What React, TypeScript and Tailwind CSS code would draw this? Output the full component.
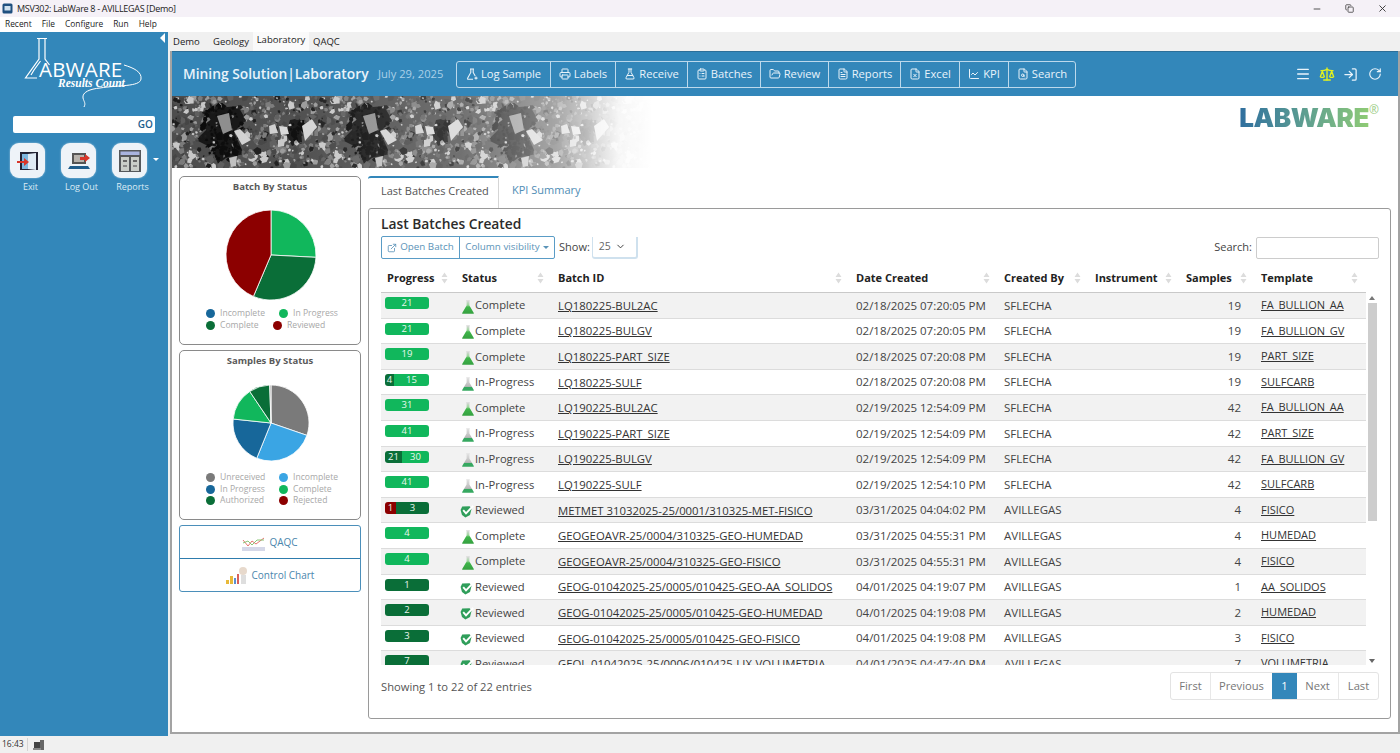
import React from "react";
import {
  FlaskConical,
  Printer,
  ClipboardList,
  FolderOpen,
  FileText,
  FileX,
  LineChart,
  FileSearch,
  Menu,
  Scale,
  LogIn,
  RotateCw,
  Minus,
  X,
  Copy,
  ExternalLink,
  ChevronDown,
} from "lucide-react";

type Seg = { v: number; w?: number; c: string };
type Row = {
  bar: Seg[];
  status: "Complete" | "In-Progress" | "Reviewed";
  id: string;
  date: string;
  by: string;
  samples: number;
  tpl: string;
};

const G = "bg-[#11b75c]";
const D = "bg-[#0a6e38]";
const R = "bg-[#8c0000]";

const rows: Row[] = [
  { bar: [{ v: 21, c: G }], status: "Complete", id: "LQ180225-BUL2AC", date: "02/18/2025 07:20:05 PM", by: "SFLECHA", samples: 19, tpl: "FA_BULLION_AA" },
  { bar: [{ v: 21, c: G }], status: "Complete", id: "LQ180225-BULGV", date: "02/18/2025 07:20:05 PM", by: "SFLECHA", samples: 19, tpl: "FA_BULLION_GV" },
  { bar: [{ v: 19, c: G }], status: "Complete", id: "LQ180225-PART_SIZE", date: "02/18/2025 07:20:08 PM", by: "SFLECHA", samples: 19, tpl: "PART_SIZE" },
  { bar: [{ v: 4, w: 9, c: D }, { v: 15, c: G }], status: "In-Progress", id: "LQ180225-SULF", date: "02/18/2025 07:20:08 PM", by: "SFLECHA", samples: 19, tpl: "SULFCARB" },
  { bar: [{ v: 31, c: G }], status: "Complete", id: "LQ190225-BUL2AC", date: "02/19/2025 12:54:09 PM", by: "SFLECHA", samples: 42, tpl: "FA_BULLION_AA" },
  { bar: [{ v: 41, c: G }], status: "In-Progress", id: "LQ190225-PART_SIZE", date: "02/19/2025 12:54:09 PM", by: "SFLECHA", samples: 42, tpl: "PART_SIZE" },
  { bar: [{ v: 21, w: 17, c: D }, { v: 30, c: G }], status: "In-Progress", id: "LQ190225-BULGV", date: "02/19/2025 12:54:09 PM", by: "SFLECHA", samples: 42, tpl: "FA_BULLION_GV" },
  { bar: [{ v: 41, c: G }], status: "In-Progress", id: "LQ190225-SULF", date: "02/19/2025 12:54:10 PM", by: "SFLECHA", samples: 42, tpl: "SULFCARB" },
  { bar: [{ v: 1, w: 11, c: R }, { v: 3, c: D }], status: "Reviewed", id: "METMET 31032025-25/0001/310325-MET-FISICO", date: "03/31/2025 04:04:02 PM", by: "AVILLEGAS", samples: 4, tpl: "FISICO" },
  { bar: [{ v: 4, c: G }], status: "Complete", id: "GEOGEOAVR-25/0004/310325-GEO-HUMEDAD", date: "03/31/2025 04:55:31 PM", by: "AVILLEGAS", samples: 4, tpl: "HUMEDAD" },
  { bar: [{ v: 4, c: G }], status: "Complete", id: "GEOGEOAVR-25/0004/310325-GEO-FISICO", date: "03/31/2025 04:55:31 PM", by: "AVILLEGAS", samples: 4, tpl: "FISICO" },
  { bar: [{ v: 1, c: D }], status: "Reviewed", id: "GEOG-01042025-25/0005/010425-GEO-AA_SOLIDOS", date: "04/01/2025 04:19:07 PM", by: "AVILLEGAS", samples: 1, tpl: "AA_SOLIDOS" },
  { bar: [{ v: 2, c: D }], status: "Reviewed", id: "GEOG-01042025-25/0005/010425-GEO-HUMEDAD", date: "04/01/2025 04:19:08 PM", by: "AVILLEGAS", samples: 2, tpl: "HUMEDAD" },
  { bar: [{ v: 3, c: D }], status: "Reviewed", id: "GEOG-01042025-25/0005/010425-GEO-FISICO", date: "04/01/2025 04:19:08 PM", by: "AVILLEGAS", samples: 3, tpl: "FISICO" },
  { bar: [{ v: 7, c: D }], status: "Reviewed", id: "GEOL-01042025-25/0006/010425-LIX-VOLUMETRIA", date: "04/01/2025 04:47:40 PM", by: "AVILLEGAS", samples: 7, tpl: "VOLUMETRIA" },
];

function FlaskPlus({ size }: { size: number }) {
  return (
    <svg width={size} height={size} viewBox="0 0 12 12" fill="none" stroke="currentColor" strokeWidth="1.1">
      <path d="M4 1h4M4.8 1v3.4L1.6 10.2c-.3.5 0 1 .6 1H7M7.2 1v3.4l2 3.6" />
      <path d="M10 8.6v3M8.5 10.1h3" />
    </svg>
  );
}

const navItems = [
  { label: "Log Sample", Icon: FlaskPlus, w: "w-[93px]" },
  { label: "Labels", Icon: Printer, w: "w-[65px]" },
  { label: "Receive", Icon: FlaskConical, w: "w-[72px]" },
  { label: "Batches", Icon: ClipboardList, w: "w-[73px]" },
  { label: "Review", Icon: FolderOpen, w: "w-[68px]" },
  { label: "Reports", Icon: FileText, w: "w-[72px]" },
  { label: "Excel", Icon: FileX, w: "w-[59px]" },
  { label: "KPI", Icon: LineChart, w: "w-[49px]" },
  { label: "Search", Icon: FileSearch, w: "w-[67px]" },
];

const columns = [
  { label: "Progress", w: "w-[75px]" },
  { label: "Status", w: "w-[96px]" },
  { label: "Batch ID", w: "w-[298px]" },
  { label: "Date Created", w: "w-[148px]" },
  { label: "Created By", w: "w-[91px]" },
  { label: "Instrument", w: "w-[91px]" },
  { label: "Samples", w: "w-[75px]" },
  { label: "Template", w: "w-[111px]" },
];

function arc(cx: number, cy: number, r: number, a: number, b: number) {
  const p = (d: number) => {
    const t = ((d - 90) * Math.PI) / 180;
    return `${cx + r * Math.cos(t)} ${cy + r * Math.sin(t)}`;
  };
  return `M${cx} ${cy}L${p(a)}A${r} ${r} 0 ${b - a > 180 ? 1 : 0} 1 ${p(b)}Z`;
}

function Pie({ r, slices }: { r: number; slices: [number, number, string][] }) {
  const s = r * 2 + 2;
  return (
    <svg width={s} height={s} className="block">
      {slices.map(([a, b, c]) => (
        <path key={a} d={arc(r + 1, r + 1, r, a, b)} fill={c} stroke="#fff" strokeWidth="0.8" />
      ))}
    </svg>
  );
}

function Legend({ label, color, w }: { label: string; color: string; w: string }) {
  return (
    <div className={`flex items-center ${w}`}>
      <span className={`w-[9px] h-[9px] rounded-full mr-[5px] shrink-0 ${color}`} />
      <span className="text-[8.6px] leading-[11.5px] text-[#a8a8a8] whitespace-nowrap">{label}</span>
    </div>
  );
}

// one tile of the rock picture, it repeats every 146px across the banner
function RockTexture() {
  let seed = 4321;
  const rnd = () => {
    seed = (seed * 16807) % 2147483647;
    return seed / 2147483647;
  };
  const shards: React.ReactElement[] = [];
  for (let i = 0; i < 640; i++) {
    const x = rnd() * 146;
    const y = rnd() * 72;
    const inDark = Math.hypot(x - 50, (y - 36) * 0.7) < 21 || Math.hypot(x - 124, y - 36) < 10;
    const dark = inDark && rnd() < 0.8;
    const s = 1 + rnd() * rnd() * 4.5;
    const start = rnd() * 6;
    const pts = Array.from({ length: 5 }, (_, k) => {
      const t = start + (k / 5) * Math.PI * 2;
      const rr = s * (0.6 + rnd() * 0.6);
      return `${(x + rr * Math.cos(t)).toFixed(1)},${(y + rr * Math.sin(t)).toFixed(1)}`;
    }).join(" ");
    const pick = ["#1c1c1c", "#444", "#5e5e5e", "#7a7a7a", "#9a9a9a", "#c8c8c8"][Math.floor(rnd() * 6)];
    shards.push(<polygon key={i} points={pts} fill={dark ? "#0a0a0a" : pick} />);
  }
  return (
    <svg width="480" height="72" className="block shrink-0">
      <defs>
        <pattern id="rockTile" width="146" height="72" patternUnits="userSpaceOnUse">
          <rect width="146" height="72" fill="#4d4d4d" />
          <polygon points="30,16 44,12 66,10 74,24 62,36 72,58 54,62 46,68 40,52 24,44 36,32" fill="#161616" />
          <polygon points="118,24 128,22 130,46 120,50 114,38" fill="#181818" />
          {shards}
          <polygon points="45,20 57,17 60,34 51,38" fill="#8d8d8d" />
          <polygon points="62,35 68,33 79,44 70,49" fill="#d2d2d2" />
          <polygon points="97,30 103,28 106,37 98,38" fill="#cfcfcf" />
          <polygon points="107,30 115,31 117,38 109,39" fill="#d8d8d8" />
          <polygon points="106,44 113,43 112,50 106,51" fill="#c8c8c8" />
          <polygon points="130,30 140,23 145,31 133,45" fill="#d5d5d5" />
          <polygon points="57,62 65,60 64,70 59,71" fill="#c0c0c0" />
        </pattern>
        <linearGradient id="rockFade" x1="0" x2="1" y1="0" y2="0">
          <stop offset="0" stopColor="#fff" stopOpacity="0" />
          <stop offset="0.28" stopColor="#fff" stopOpacity="0.03" />
          <stop offset="0.6" stopColor="#fff" stopOpacity="0.2" />
          <stop offset="0.8" stopColor="#fff" stopOpacity="0.5" />
          <stop offset="0.93" stopColor="#fff" stopOpacity="0.95" />
          <stop offset="1" stopColor="#fff" stopOpacity="1" />
        </linearGradient>
      </defs>
      <rect width="480" height="72" fill="url(#rockTile)" />
      <rect width="480" height="72" fill="url(#rockFade)" />
    </svg>
  );
}

function LabFlask({ level }: { level: "full" | "low" }) {
  const id = level === "full" ? "flaskFull" : "flaskLow";
  return (
    <svg width="12" height="14" viewBox="0 0 12 14" className="shrink-0 translate-y-[1px]">
      <defs>
        <linearGradient id={id} x1="0" x2="0" y1="0" y2="1">
          {level === "full" ? (
            <>
              <stop offset="0.05" stopColor="#d8d8d8" />
              <stop offset="0.35" stopColor="#9fd69f" />
              <stop offset="0.5" stopColor="#3fb54a" />
              <stop offset="1" stopColor="#35a040" />
            </>
          ) : (
            <>
              <stop offset="0.05" stopColor="#e2e2e2" />
              <stop offset="0.68" stopColor="#b8b8b8" />
              <stop offset="0.7" stopColor="#36a860" />
              <stop offset="1" stopColor="#36a860" />
            </>
          )}
        </linearGradient>
      </defs>
      <path d="M4.2 0.3h3.6v0.9h-0.4v4.2L11.8 13c.2.4 0 .8-.5.8H.7c-.5 0-.7-.4-.5-.8L4.6 5.4V1.2h-.4z" fill={`url(#${id})`} />
    </svg>
  );
}

function StatusIcon({ status }: { status: Row["status"] }) {
  if (status === "Reviewed") {
    return (
      <svg width="14" height="13" viewBox="0 0 14 13" className="shrink-0 -ml-[2px] translate-y-[1px]">
        <path d="M0.6 5 2.2 1.6 9.6 1.2 11.6 3.6 10 10 5.4 12.6 2 10z" fill="#2f9e5a" />
        <path d="M3.2 5.2 6 8.4 13.2 0.8" fill="none" stroke="#fff" strokeWidth="1.9" />
      </svg>
    );
  }
  return <LabFlask level={status === "Complete" ? "full" : "low"} />;
}

function Arrows() {
  return (
    <svg width="7" height="12" viewBox="0 0 7 12" className="shrink-0">
      <path d="M3.5 0.5 6.5 5H0.5z M3.5 11.5 0.5 7H6.5z" fill="#dcdcdc" />
    </svg>
  );
}

function SideButton({ label, children }: { label: string; children: React.ReactNode }) {
  return (
    <div className="flex flex-col items-center w-[51px]">
      <div className="w-[35px] h-[35px] rounded-[9px] bg-[#eef3f8] flex items-center justify-center shadow-[0_0_2px_rgba(255,255,255,0.6)]">
        {children}
      </div>
      <span className="text-[9px] leading-[12px] mt-[3px] translate-x-[3px] text-[#dcebf5] whitespace-nowrap">{label}</span>
    </div>
  );
}

export default function App() {
  return (
    <div className="w-[1400px] h-[753px] overflow-hidden flex flex-col bg-white text-[#333] font-['Open_Sans',sans-serif]">
      {/* title bar */}
      <div className="h-[17px] shrink-0 bg-[#f5f1f7] flex items-center pl-[2px] text-[#222]">
        <svg width="11" height="11" viewBox="0 0 11 11" className="mr-[4px]">
          <rect x="0.5" y="0.5" width="10" height="10" rx="1.5" fill="#1f4f7f" />
          <rect x="2.5" y="3" width="6" height="4.5" fill="#cfe0ee" />
        </svg>
        <span className="text-[9px] tracking-[-0.3px]">MSV302: LabWare 8 - AVILLEGAS [Demo]</span>
        <div className="ml-auto flex items-center gap-[23px] pr-[12px] text-[#333]">
          <Minus size={10} />
          <Copy size={9} />
          <X size={11} />
        </div>
      </div>

      {/* menu */}
      <div className="h-[15px] shrink-0 bg-white flex items-center pl-[5px] gap-[10px] text-[8.4px] text-[#222]">
        <span>Recent</span>
        <span>File</span>
        <span>Configure</span>
        <span>Run</span>
        <span>Help</span>
      </div>

      <div className="flex-1 flex min-h-0">
        {/* sidebar */}
        <aside className="w-[168px] shrink-0 bg-[#3387ba] relative flex flex-col">
          <div className="absolute left-[160px] top-[1px] w-0 h-0 border-y-[5px] border-y-transparent border-r-[5px] border-r-white" />
          <div className="relative h-[84px] shrink-0">
            <svg width="168" height="84" className="absolute left-0 top-0">
              <path
                d="M37 6.5h10 M39 6.5V27L25.5 46H37 M45 6.5V27L49.5 33 M40.5 29 L34 38 L31 43"
                fill="none"
                stroke="#fff"
                strokeWidth="1.2"
              />
              <path
                d="M124 33C134 36 142 40 141 47C140 55 118 53 100 56C90 57 82 60 83 66C84 70 86 71 84 75"
                fill="none"
                stroke="#fff"
                strokeWidth="1"
              />
            </svg>
            <span className="absolute left-[39px] top-[30px] text-[20.5px] leading-[14px] font-medium text-white tracking-[0.2px]">
              ABWARE
            </span>
            <span className="absolute left-[58px] top-[46px] text-[11.5px] leading-[11px] italic font-semibold text-white font-['Liberation_Serif',serif]">
              Results Count
            </span>
          </div>
          <div className="mx-[13px] h-[17px] bg-white rounded-[2px] flex items-center justify-end pr-[2px] text-[10px] font-semibold text-[#1d5f8e]">
            GO
          </div>
          <div className="flex pl-[2px] mt-[10px] relative">
            <SideButton label="Exit">
              <svg width="24" height="24" viewBox="0 0 24 24">
                <rect x="4" y="3" width="18" height="18" fill="#223" />
                <rect x="6" y="5" width="14" height="15" fill="#7db6de" />
                <path d="M12 5l8 -1v17l-8-1z" fill="#dfeaf4" />
                <path d="M1 12h7V9l5 4-5 4v-3H1z" fill="#d8362a" />
              </svg>
            </SideButton>
            <SideButton label="Log Out">
              <svg width="24" height="24" viewBox="0 0 24 24">
                <rect x="5" y="4" width="14" height="11" fill="#555" />
                <rect x="7" y="6" width="10" height="7" fill="#b7b2ac" />
                <path d="M3 17h18l2 3H1z" fill="#1f5d8c" />
                <path d="M13 8h5V5l5 4-5 4v-2h-5z" fill="#d8362a" />
              </svg>
            </SideButton>
            <SideButton label="Reports">
              <svg width="24" height="24" viewBox="0 0 24 24">
                <rect x="1" y="1" width="22" height="22" fill="#55585c" />
                <rect x="2.5" y="2.5" width="19" height="3.5" fill="#a9b4e0" />
                <rect x="3" y="8" width="8" height="14" fill="#c9cdc9" />
                <rect x="13" y="8" width="8" height="14" fill="#c9cdc9" />
                <rect x="5" y="11" width="4" height="2" fill="#666" />
                <rect x="15" y="11" width="4" height="2" fill="#666" />
                <rect x="5" y="16" width="4" height="2" fill="#888" />
                <rect x="15" y="16" width="4" height="2" fill="#888" />
              </svg>
            </SideButton>
            <div className="w-0 h-0 mt-[15px] -ml-[2px] border-x-[3px] border-x-transparent border-t-[3px] border-t-white" />
          </div>
        </aside>

        <div className="flex-1 min-w-0 flex flex-col bg-[#f0f0f0]">
          {/* window tabs */}
          <div className="h-[19px] shrink-0 flex items-end pl-[2px] text-[9.5px] text-[#222]">
            <span className="w-[41px] h-[17px] pl-[3px] flex items-center">Demo</span>
            <span className="w-[42px] h-[17px] pl-[2px] flex items-center">Geology</span>
            <span className="w-[56px] h-[19px] bg-[#fafafa] flex items-center justify-center pb-[2px]">Laboratory</span>
            <span className="h-[17px] pl-[4px] flex items-center">QAQC</span>
          </div>

          {/* frame */}
          <div className="flex-1 min-h-0 ml-[2px] mb-[2px] border-l-2 border-r-2 border-b-2 border-[#a3a3a3] bg-white flex flex-col">
            <header className="h-[45px] shrink-0 bg-[#3387ba] border-t border-[#2c6f99] flex items-center pl-[11px] pr-[16px]">
              <h1 className="text-[13.8px] font-semibold text-[#e9f3fa] w-[195px] whitespace-nowrap">Mining Solution|Laboratory</h1>
              <span className="text-[11.2px] text-[#a9d0e8] w-[78px] whitespace-nowrap">July 29, 2025</span>
              <nav className="flex h-[27px] border border-[#bcd9ec] rounded-[3px]">
                {navItems.map(({ label, Icon, w }, i) => (
                  <div
                    key={label}
                    className={`${w} flex items-center justify-center gap-[3px] text-[11.2px] text-[#e9f3fa] whitespace-nowrap ${i ? "border-l border-[#bcd9ec]" : ""}`}
                  >
                    <Icon size={12} />
                    {label}
                  </div>
                ))}
              </nav>
              <div className="ml-auto flex items-center gap-[8px] text-[#eaf4fb]">
                <Menu size={16} />
                <Scale size={16} className="text-[#e3f21f]" />
                <LogIn size={15} />
                <RotateCw size={14} className="ml-[2px]" />
              </div>
            </header>

            {/* banner */}
            <div className="h-[72px] shrink-0 flex overflow-hidden">
              <RockTexture />
              <div className="ml-auto mr-[19px] mt-[9px] flex items-start">
                <span className="text-[26px] leading-[26px] font-black tracking-[-0.4px] text-transparent bg-clip-text bg-linear-to-r from-[#2f6e9e] to-[#8fcb74] font-['Inter',sans-serif]">
                  LABWARE
                </span>
                <span className="text-[12px] leading-[12px] text-[#9ccd85] -mt-[1px]">®</span>
              </div>
            </div>

            {/* body */}
            <div className="flex-1 min-h-0 flex pl-[7px] pr-[7px] pt-[8px]">
              <div className="w-[182px] shrink-0 flex flex-col gap-[5px]">
                <section className="h-[169px] border border-[#8a8a8a] rounded-[5px] flex flex-col items-center pt-[4px]">
                  <h3 className="text-[9.5px] leading-[12px] font-bold text-[#5a5a5a]">Batch By Status</h3>
                  <div className="mt-[16px] ml-[1px]">
                    <Pie r={45} slices={[[0, 93, "#11b75c"], [93, 203, "#0a6e38"], [203, 360, "#8c0000"]]} />
                  </div>
                  <div className="self-start ml-[26px] mt-[7px] flex flex-col">
                    <div className="flex">
                      <Legend label="Incomplete" color="bg-[#17679a]" w="w-[73px]" />
                      <Legend label="In Progress" color="bg-[#11b75c]" w="w-[73px]" />
                    </div>
                    <div className="flex">
                      <Legend label="Complete" color="bg-[#0a6e38]" w="w-[67px]" />
                      <Legend label="Reviewed" color="bg-[#8c0000]" w="w-[73px]" />
                    </div>
                  </div>
                </section>
                <section className="h-[170px] border border-[#8a8a8a] rounded-[5px] flex flex-col items-center pt-[4px]">
                  <h3 className="text-[9.5px] leading-[12px] font-bold text-[#5a5a5a]">Samples By Status</h3>
                  <div className="mt-[17px] ml-[1px]">
                    <Pie
                      r={38}
                      slices={[
                        [0, 109, "#7a7a7a"],
                        [109, 202, "#3aa5e4"],
                        [202, 276, "#17679a"],
                        [276, 326, "#11b75c"],
                        [326, 358, "#0a6e38"],
                        [358, 360, "#999"],
                      ]}
                    />
                  </div>
                  <div className="self-start ml-[26px] mt-[10px] grid grid-cols-[73px_73px]">
                    <Legend label="Unreceived" color="bg-[#7a7a7a]" w="" />
                    <Legend label="Incomplete" color="bg-[#3aa5e4]" w="" />
                    <Legend label="In Progress" color="bg-[#17679a]" w="" />
                    <Legend label="Complete" color="bg-[#11b75c]" w="" />
                    <Legend label="Authorized" color="bg-[#0a6e38]" w="" />
                    <Legend label="Rejected" color="bg-[#8c0000]" w="" />
                  </div>
                </section>
                <div className="h-[67px] border border-[#4b8fba] rounded-[3px] flex flex-col text-[10px] text-[#4a86ad]">
                  <div className="h-[33px] flex items-center justify-center gap-[4px] border-b border-[#2e7cad]">
                    <svg width="23" height="18" viewBox="0 0 23 18">
                      <rect y="14" width="23" height="4" fill="#d5d8e8" />
                      <path d="M1 7 6 13 10 8 14 11 22 5" fill="none" stroke="#e2675f" strokeWidth="0.9" />
                      <path d="M1 10 6 8 10 12 15 7 22 7" fill="none" stroke="#7fbf6a" strokeWidth="0.9" />
                    </svg>
                    QAQC
                  </div>
                  <div className="flex-1 flex items-center justify-center gap-[3px]">
                    <svg width="23" height="20" viewBox="0 0 23 20">
                      <rect x="0" y="15" width="3" height="4" fill="#e8b93a" />
                      <rect x="4" y="11" width="3" height="8" fill="#e8b93a" />
                      <rect x="8" y="13" width="2" height="6" fill="#5b8fd0" />
                      <rect x="11" y="9" width="2" height="10" fill="#d8605c" />
                      <circle cx="17" cy="6" r="4" fill="#e7d9cc" />
                      <rect x="15" y="10" width="5" height="9" fill="#dedede" />
                    </svg>
                    Control Chart
                  </div>
                </div>
              </div>

              <div className="flex-1 min-w-0 ml-[7px] flex flex-col pb-[13px]">
                {/* tabs */}
                <div className="h-[32px] shrink-0 flex text-[11px]">
                  <div className="w-[131px] h-[32px] bg-white border-t-2 border-[#3387ba] border-r border-r-[#d5d5d5] flex items-center pl-[13px] pb-[3px] text-[#555] rounded-tl-[3px] z-10 -mb-px whitespace-nowrap">
                    Last Batches Created
                  </div>
                  <div className="pl-[13px] pb-[3px] flex items-center text-[#4f8db5]">KPI Summary</div>
                </div>
                <div className="flex-1 min-h-0 border border-[#9a9a9a] rounded-[3px] flex flex-col pl-[12px] pr-[11px] pt-[6px]">
                  <h2 className="text-[13.8px] leading-[17px] font-semibold text-[#2b2b2b]">Last Batches Created</h2>
                  <div className="h-[23px] mt-[4px] shrink-0 flex items-center text-[11px]">
                    <div className="flex h-[23px] w-[174px] border border-[#5a9cc6] rounded-[2px] text-[#5a93b8] text-[9.8px]">
                      <div className="w-[78px] flex items-center justify-center gap-[3px] border-r border-[#5a9cc6]">
                        <ExternalLink size={10} />
                        Open Batch
                      </div>
                      <div className="flex-1 flex items-center justify-center gap-[3px]">
                        Column visibility
                        <span className="w-0 h-0 border-x-[3px] border-x-transparent border-t-[3px] border-t-[#5a93b8]" />
                      </div>
                    </div>
                    <span className="ml-[4px] text-[#444]">Show:</span>
                    <div className="ml-[2px] w-[46px] h-[22px] border-r-2 border-b-2 border-l border-[#cfe1ee] rounded-b-[3px] flex items-center justify-between pl-[6px] pr-[10px] text-[#666] text-[10.5px]">
                      25
                      <ChevronDown size={11} className="text-[#333]" />
                    </div>
                    <span className="ml-auto mr-[4px] text-[#444]">Search:</span>
                    <div className="w-[123px] h-[22px] border border-[#ccc] rounded-[2px]" />
                  </div>

                  {/* table */}
                  <div className="flex mt-[5px] h-[401px] shrink-0">
                    <div className="w-[985px] shrink-0 overflow-hidden">
                      <div className="flex h-[29px] border-b border-[#c9c9c9]">
                        {columns.map((c) => (
                          <div key={c.label} className={`${c.w} shrink-0 pl-[6px] pr-[8px] flex items-center justify-between text-[11px] font-bold text-[#222] whitespace-nowrap`}>
                            {c.label}
                            <Arrows />
                          </div>
                        ))}
                      </div>
                      <div className="h-[372px] overflow-hidden">
                        {rows.map((r, i) => (
                          <div
                            key={r.id}
                            className={`flex h-[25.6px] items-center border-b border-[#dcdcdc] text-[11.5px] text-[#444] whitespace-nowrap ${i % 2 === 0 ? "bg-[#f2f2f2]" : "bg-white"}`}
                          >
                            <div className="w-[75px] shrink-0 pl-[4px] self-start pt-[4px]">
                              <div className="w-[44px] h-[12px] rounded-[3px] overflow-hidden flex text-[9.5px] leading-[12px] text-[#e9f7ee]">
                                {r.bar.map((s) => (
                                  <span
                                    key={s.v}
                                    className={`${s.c} text-center ${s.w ? "shrink-0" : "flex-1"}`}
                                    style={s.w ? { width: s.w } : undefined}
                                  >
                                    {s.v}
                                  </span>
                                ))}
                              </div>
                            </div>
                            <div className="w-[96px] shrink-0 pl-[6px] pt-[1px] flex items-center gap-[1px] text-[11.2px]">
                              <StatusIcon status={r.status} />
                              {r.status}
                            </div>
                            <div className="w-[298px] shrink-0 pl-[6px] underline text-[#333] text-[11.35px]">{r.id}</div>
                            <div className="w-[148px] shrink-0 pl-[6px]">{r.date}</div>
                            <div className="w-[91px] shrink-0 pl-[6px]">{r.by}</div>
                            <div className="w-[91px] shrink-0" />
                            <div className="w-[75px] shrink-0 pr-[14px] text-right">{r.samples}</div>
                            <div className="w-[111px] shrink-0 pl-[6px] underline text-[#333] text-[11px]">{r.tpl}</div>
                          </div>
                        ))}
                      </div>
                    </div>
                    {/* scrollbar */}
                    <div className="w-[12px] mt-[29px] flex flex-col items-center">
                      <div className="w-0 h-0 mt-[3px] border-x-[3px] border-x-transparent border-b-[4px] border-b-[#777]" />
                      <div className="w-[9px] h-[218px] mt-[3px] bg-[#cdcdcd]" />
                      <div className="mt-auto mb-[2px] w-0 h-0 border-x-[3px] border-x-transparent border-t-[4px] border-t-[#666]" />
                    </div>
                  </div>

                  <div className="mt-[7px] flex items-center justify-between text-[11.2px]">
                    <span className="text-[#555] pt-[2px]">Showing 1 to 22 of 22 entries</span>
                    <div className="flex h-[28px] border border-[#e3e3e3] rounded-[3px] text-[#777]">
                      <span className="w-[40px] flex items-center justify-center border-r border-[#e8e8e8]">First</span>
                      <span className="w-[61px] flex items-center justify-center">Previous</span>
                      <span className="w-[25px] flex items-center justify-center bg-[#3387ba] text-white">1</span>
                      <span className="w-[42px] flex items-center justify-center border-r border-[#e8e8e8]">Next</span>
                      <span className="w-[39px] flex items-center justify-center">Last</span>
                    </div>
                  </div>
                </div>
              </div>
            </div>
          </div>
        </div>
      </div>

      {/* status bar */}
      <div className="h-[17px] shrink-0 bg-[#f0f0f0] flex items-center pl-[2px] gap-[5px] text-[8.5px] text-[#333]">
        <span className="pr-[3px] border-r border-[#d4d4d4]">16:43</span>
        <svg width="12" height="12" viewBox="0 0 12 12">
          <rect x="1" y="3" width="7" height="6" fill="#444" />
          <rect x="7" y="1" width="4" height="10" fill="#666" />
          <rect x="0" y="9" width="8" height="2" fill="#888" />
        </svg>
      </div>
    </div>
  );
}
